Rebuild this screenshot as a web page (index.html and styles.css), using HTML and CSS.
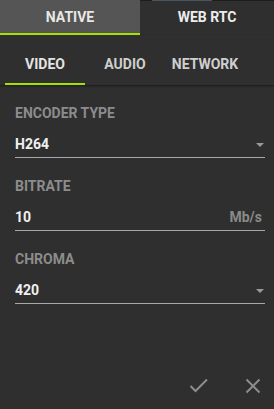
FILE: index.html
```html
<!DOCTYPE html>
<html>
<head>
<meta charset="utf-8">
<link rel="stylesheet" href="styles.css">
</head>
<body>
<div class="panel">
  <div class="top-tabs">
    <div class="ttab active">NATIVE</div>
    <div class="ttab">
      <span class="strip"><span class="strip-img"></span></span>
      WEB RTC
    </div>
  </div>
  <div class="sub-tabs">
    <div class="stab active">VIDEO</div>
    <div class="stab">AUDIO</div>
    <div class="stab">NETWORK</div>
  </div>
  <div class="form">
    <div class="field">
      <div class="label">ENCODER TYPE</div>
      <div class="row">
        <span class="value">H264</span>
        <span class="arrow"></span>
      </div>
    </div>
    <div class="field">
      <div class="label">BITRATE</div>
      <div class="row">
        <span class="value">10</span>
        <span class="unit">Mb/s</span>
      </div>
    </div>
    <div class="field">
      <div class="label">CHROMA</div>
      <div class="row">
        <span class="value">420</span>
        <span class="arrow"></span>
      </div>
    </div>
  </div>
  <div class="actions">
    <svg class="icon" width="20" height="16" viewBox="0 0 20 16">
      <polyline points="1.5,8 6.5,13 18,1.5" fill="none" stroke="#8c8c8c" stroke-width="2"/>
    </svg>
    <svg class="icon" width="16" height="16" viewBox="0 0 16 16">
      <path d="M1.5 1.5 L14.5 14.5 M14.5 1.5 L1.5 14.5" fill="none" stroke="#8c8c8c" stroke-width="2"/>
    </svg>
  </div>
</div>
</body>
</html>
```

FILE: styles.css
```css
html, body {
  margin: 0;
  padding: 0;
  background: #2f2f2f;
}
body {
  width: 274px;
  height: 409px;
  overflow: hidden;
  font-family: Roboto, "Liberation Sans", sans-serif;
  font-weight: 700;
  font-size: 14px;
  line-height: 16px;
}
.panel {
  display: flex;
  flex-direction: column;
  height: 409px;
}
.top-tabs {
  display: flex;
  height: 35px;
}
.ttab {
  position: relative;
  flex: 1;
  display: flex;
  justify-content: center;
  align-items: flex-start;
  padding-top: 9px;
  box-sizing: border-box;
  color: #ececec;
  border-bottom: 2px solid transparent;
}
.ttab.active {
  flex: 0 0 140px;
  background: #555555;
  color: #e8e8e8;
  border-bottom-color: #a6e000;
}
.strip {
  position: absolute;
  top: 0;
  left: 0;
  right: 0;
  height: 1px;
  background: #1d1d1d;
}
.strip-img {
  position: absolute;
  top: 0;
  left: 12px;
  width: 60px;
  height: 1px;
  background: #4a5563;
}
.sub-tabs {
  display: flex;
  height: 50px;
  padding-left: 5px;
  box-sizing: border-box;
  box-shadow: 0 1px 2px rgba(0, 0, 0, 0.45);
}
.stab {
  width: 80px;
  display: flex;
  justify-content: center;
  align-items: flex-start;
  padding-top: 21px;
  box-sizing: border-box;
  color: #cfcfcf;
  border-bottom: 2px solid transparent;
}
.stab.active {
  color: #e4e4e4;
  border-bottom-color: #a6e000;
}
.form {
  padding: 20px 9px 0 15px;
}
.field {
  margin-bottom: 20.5px;
}
.label {
  color: #8c8c8c;
  margin-bottom: 14.5px;
}
.row {
  display: flex;
  justify-content: space-between;
  align-items: flex-start;
  height: 21px;
  border-bottom: 1px solid #a8a8a8;
}
.value {
  color: #f0f0f0;
}
.unit {
  color: #8a8a8a;
  margin-right: 3px;
}
.arrow {
  width: 0;
  height: 0;
  margin-top: 7px;
  margin-right: 1px;
  border-left: 4px solid transparent;
  border-right: 4px solid transparent;
  border-top: 4px solid #9a9a9a;
}
.actions {
  margin-top: auto;
  display: flex;
  justify-content: flex-end;
  align-items: center;
  gap: 36px;
  padding: 0 13px 15px 0;
}
.icon {
  display: block;
}
```
